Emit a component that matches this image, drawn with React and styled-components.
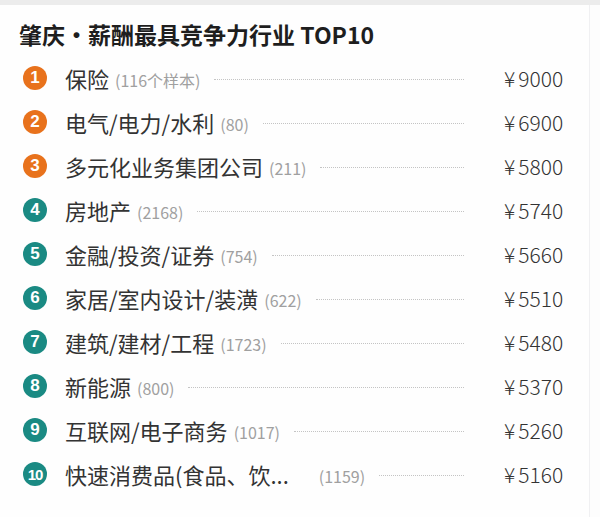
import React from "react";
import styled, { createGlobalStyle } from "styled-components";

const GlobalStyle = createGlobalStyle`
  html, body {
    margin: 0;
    padding: 0;
    background: #fdfdfd;
  }
  body {
    font-family: "Noto Sans CJK SC", "Noto Sans", sans-serif;
  }
`;

const rows = [
  { name: "保险", count: "(116个样本)", price: "9000" },
  { name: "电气/电力/水利", count: "(80)", price: "6900" },
  { name: "多元化业务集团公司", count: "(211)", price: "5800" },
  { name: "房地产", count: "(2168)", price: "5740" },
  { name: "金融/投资/证券", count: "(754)", price: "5660" },
  { name: "家居/室内设计/装潢", count: "(622)", price: "5510" },
  { name: "建筑/建材/工程", count: "(1723)", price: "5480" },
  { name: "新能源", count: "(800)", price: "5370" },
  { name: "互联网/电子商务", count: "(1017)", price: "5260" },
  { name: "快速消费品(食品、饮...", count: "(1159)", price: "5160", gap: 30 },
];

export default function App() {
  return (
    <>
      <GlobalStyle />
      <Page>
        <TopBand />
        <Panel>
          <Title>肇庆·薪酬最具竞争力行业 TOP10</Title>
          <List>
            {rows.map((r, i) => (
              <Row key={i}>
                <Badge $hot={i < 3} $wide={i === 9}>{i + 1}</Badge>
                <Name>{r.name}</Name>
                <Count $gap={r.gap}>{r.count}</Count>
                <Dots />
                <Price>
                  <Yen>¥</Yen>
                  {r.price}
                </Price>
              </Row>
            ))}
          </List>
        </Panel>
      </Page>
    </>
  );
}

const Page = styled.div`
  width: 600px;
  height: 517px;
  display: flex;
  flex-direction: column;
  background: #fdfdfd;
  overflow: hidden;
`;

const TopBand = styled.div`
  height: 5px;
  background: #ececec;
`;

const Panel = styled.div`
  flex: 1;
  margin-right: 10px;
  background: #fefefe;
  border-right: 1px solid #f0f0f2;
`;

const Title = styled.h1`
  margin: 0;
  height: 51px;
  padding: 6px 0 0 19px;
  display: flex;
  align-items: center;
  font-size: 23px;
  font-weight: bold;
  color: #1e1e1e;
  box-sizing: border-box;
`;

const List = styled.div`
  display: flex;
  flex-direction: column;
`;

const Row = styled.div`
  height: 44px;
  display: flex;
  align-items: center;
  padding-left: 23px;
`;

const Badge = styled.span`
  width: 24px;
  height: 24px;
  border-radius: 50%;
  flex-shrink: 0;
  display: flex;
  align-items: center;
  justify-content: center;
  background: ${(p) => (p.$hot ? "#e8721c" : "#1a8a83")};
  color: #fff;
  font-family: "Liberation Sans", Arial, sans-serif;
  font-weight: bold;
  font-size: ${(p) => (p.$wide ? "15px" : "17px")};
  letter-spacing: ${(p) => (p.$wide ? "-1px" : "0")};
`;

const Name = styled.span`
  margin-left: 18px;
  font-size: 22px;
  color: #333;
  white-space: nowrap;
`;

const Count = styled.span`
  margin-left: ${(p) => p.$gap || 6}px;
  font-size: 16px;
  color: #a0a0a0;
  white-space: nowrap;
  padding-top: 3px;
`;

const Dots = styled.span`
  flex: 1;
  margin: 2px 40px 0 14px;
  border-bottom: 1px dotted #c4c4c4;
`;

const Price = styled.span`
  width: 85px;
  flex-shrink: 0;
  display: flex;
  align-items: baseline;
  font-size: 21px;
  font-weight: 300;
  color: #333;
  white-space: nowrap;
`;

const Yen = styled.span`
  margin-right: 3px;
`;
